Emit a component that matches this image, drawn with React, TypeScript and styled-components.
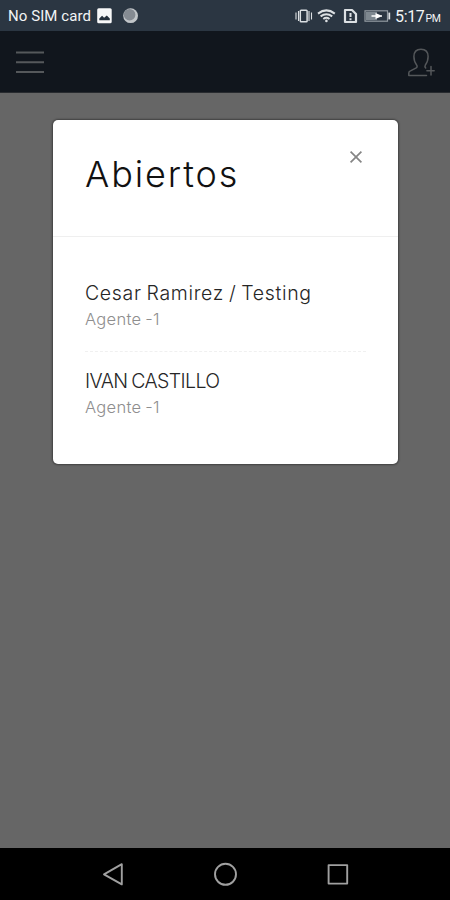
import React from 'react';
import styled, { createGlobalStyle } from 'styled-components';

const GlobalStyle = createGlobalStyle`
  * { box-sizing: border-box; }
  body { margin: 0; background: #666; }
`;

const Screen = styled.div`
  width: 450px;
  height: 900px;
  display: flex;
  flex-direction: column;
  overflow: hidden;
  background: #666;
  font-family: Inter, 'Noto Sans', sans-serif;
`;

const StatusBar = styled.header`
  height: 31px;
  flex: none;
  display: flex;
  align-items: center;
  justify-content: space-between;
  padding: 1px 9px 0 8px;
  background: #2b3642;
  color: #f2f4f5;
  font-family: Roboto, sans-serif;
  font-size: 15px;
`;

const StatusGroup = styled.div`
  display: flex;
  align-items: center;
  svg { display: block; }
`;

const Carrier = styled.span`
  width: 89px;
  font-weight: 450;
  letter-spacing: 0.08px;
  white-space: nowrap;
`;

const Clock = styled.span`
  width: 46px;
  margin-left: 4px;
  font-size: 16px;
  letter-spacing: -0.35px;
  white-space: nowrap;
`;

const Meridiem = styled.span`
  margin-left: 1px;
  font-size: 10.5px;
`;

const AppBar = styled.nav`
  height: 62px;
  flex: none;
  display: flex;
  align-items: center;
  justify-content: space-between;
  padding: 0 15px 0 16px;
  background: #11161d;
  border-bottom: 1px solid #282b2f;
`;

const IconButton = styled.button`
  display: flex;
  padding: 0;
  border: 0;
  background: none;
`;

const Content = styled.main`
  flex: 1;
  padding: 27px 52px 0 53px;
`;

const Dialog = styled.section`
  height: 344px;
  border-radius: 5px;
  background: #fff;
  box-shadow: 0 0 2px 1px rgba(0, 0, 0, 0.38);
`;

const DialogHeader = styled.div`
  height: 117px;
  display: flex;
  justify-content: space-between;
  align-items: flex-start;
  padding: 30px 35px 0 32px;
  border-bottom: 1px solid #efefef;
`;

const Title = styled.h1`
  margin: 0;
  color: #111;
  font-size: 36px;
  font-weight: 300;
  line-height: 48px;
  letter-spacing: 1.9px;
`;

const List = styled.ul`
  margin: 0;
  padding: 42px 32px 0;
  list-style: none;
`;

const Item = styled.li`
  height: 88px;

  &:first-child {
    height: 73px;
    margin-bottom: 15px;
    border-bottom: 1px dashed #f0f0f0;
  }
`;

const Name = styled.div<{ $spacing: number }>`
  color: #262626;
  font-size: 19.5px;
  font-weight: 300;
  line-height: 28px;
  letter-spacing: ${({ $spacing }) => $spacing}px;
  word-spacing: -1.2px;
  white-space: nowrap;
`;

const Role = styled.div`
  color: #8e8e8e;
  font-size: 16.5px;
  font-weight: 300;
  line-height: 24px;
  letter-spacing: 0.3px;
  word-spacing: -1px;
`;

const SystemNav = styled.footer`
  height: 52px;
  flex: none;
  display: flex;
  align-items: center;
  justify-content: space-between;
  padding: 0 101px;
  background: #000;
  svg { display: block; }
`;

const contacts = [
  { name: 'Cesar Ramirez / Testing', role: 'Agente -1', spacing: 0.66 },
  { name: 'IVAN CASTILLO', role: 'Agente -1', spacing: -0.6 },
];

const StatusIcons = () => (
  <svg width="96" height="20" viewBox="295 6 96 20" fill="none" stroke="#dce0e3">
    <path d="M296 12.5v7M298.5 11v10M309 11v10M311.5 12.5v7" strokeWidth="1.1" />
    <rect x="300.3" y="10.3" width="6.8" height="11.4" rx="0.8" strokeWidth="1.5" />
    <path d="M318 13.6Q326.4 7.2 334.8 13.6M320.6 16.4Q326.4 12 332.2 16.4M323.3 19Q326.4 16.7 329.5 19" strokeWidth="2" />
    <circle cx="326.4" cy="20.9" r="1.3" fill="#dce0e3" stroke="none" />
    <path d="M345 10h7l4 4v8h-11z" strokeWidth="2.2" strokeLinejoin="round" />
    <path d="M350.5 13v4M350.5 18.3v2" strokeWidth="2" />
    <rect x="365" y="10.8" width="22.5" height="10.4" stroke="#929aa1" strokeWidth="1.2" />
    <rect x="366" y="11.8" width="11" height="8.4" fill="#7e8890" stroke="none" />
    <path d="M371.5 15.2h4V13l5.2 2.2h1.3v1.6h-1.3l-5.2 2.2V16.8h-4z" fill="#fff" stroke="none" />
    <path d="M389.3 12.6v6.8" strokeWidth="1.8" />
  </svg>
);

export default function App() {
  return (
    <>
      <GlobalStyle />
      <Screen>
        <StatusBar>
          <StatusGroup>
            <Carrier>No SIM card</Carrier>
            <svg width="42" height="18" viewBox="97 7 42 18">
              <rect x="97.2" y="8.3" width="14.5" height="15" rx="1.5" fill="#f8f8f8" />
              <path d="M99.3 20.2v-1.7l2.8-2.7 2 2 2.7-2.3 3 3v1.7z" fill="#26313c" />
              <circle cx="130.6" cy="15.7" r="7.4" fill="#c2c6c9" />
              <circle cx="129.6" cy="14.7" r="5.8" fill="#858b92" />
            </svg>
          </StatusGroup>
          <StatusGroup>
            <StatusIcons />
            <Clock>5:17<Meridiem>PM</Meridiem></Clock>
          </StatusGroup>
        </StatusBar>
        <AppBar>
          <IconButton aria-label="Menu">
            <svg width="28" height="24" viewBox="0 0 28 24" stroke="#55585b" strokeWidth="2">
              <path d="M0 2.5h28M0 12.3h28M0 22h28" />
            </svg>
          </IconButton>
          <IconButton aria-label="Agregar usuario">
            <svg width="28" height="30" viewBox="407 47 28 30" fill="none" stroke="#54575a" strokeWidth="1.5" strokeLinecap="round" strokeLinejoin="round">
              <path d="M426.5 75.5H408.8v-2.6q0-1.3 1.7-2l5.3-2.7q2.2-1.3.8-3.3-2.7-3.2-2.7-8.3 0-7.4 7.1-7.4t7.1 7.4q0 5.1-2.7 8.3-1 1.7.3 3.1M431 66.5v8.4M426.9 70.7h7.3" />
            </svg>
          </IconButton>
        </AppBar>
        <Content>
          <Dialog role="dialog" aria-label="Abiertos">
            <DialogHeader>
              <Title>Abiertos</Title>
              <IconButton aria-label="Cerrar">
                <svg width="14" height="14" viewBox="0 0 14 14" stroke="#858585" strokeWidth="1.7">
                  <path d="M1.6 1.6l10.8 10.8M12.4 1.6L1.6 12.4" />
                </svg>
              </IconButton>
            </DialogHeader>
            <List>
              {contacts.map((contact) => (
                <Item key={contact.name}>
                  <Name $spacing={contact.spacing}>{contact.name}</Name>
                  <Role>{contact.role}</Role>
                </Item>
              ))}
            </List>
          </Dialog>
        </Content>
        <SystemNav>
          <svg width="248" height="26" viewBox="101 861 248 26" fill="none" stroke="#a0a0a0" strokeWidth="1.9" strokeLinejoin="round">
            <path d="M121.8 864.2v20.2L104 874.3z" />
            <circle cx="225.5" cy="874.3" r="10.5" />
            <rect x="328.6" y="865.1" width="18.6" height="18.5" />
          </svg>
        </SystemNav>
      </Screen>
    </>
  );
}
